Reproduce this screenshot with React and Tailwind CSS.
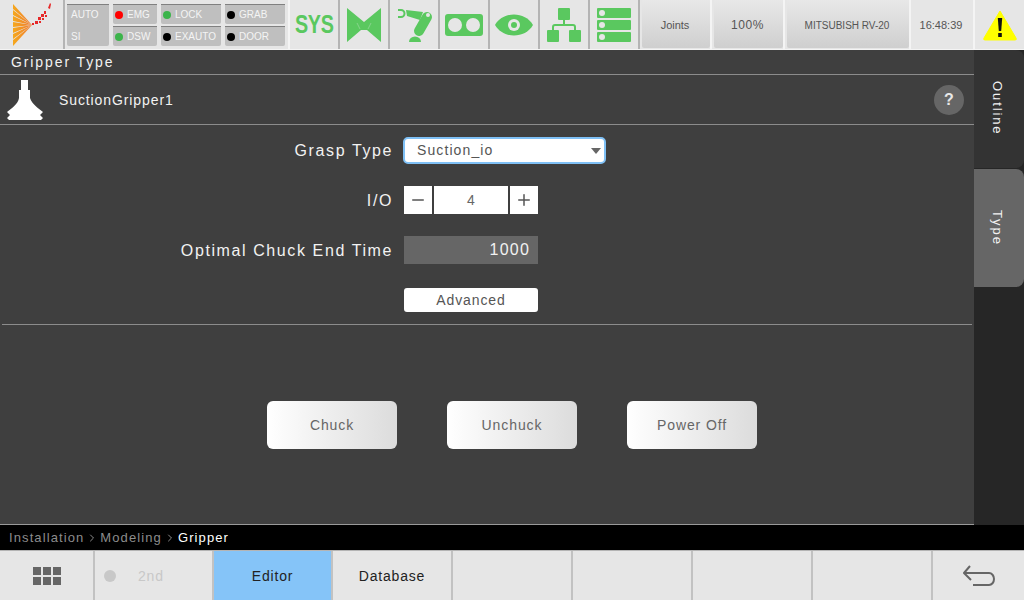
import { Plus, Minus, ChevronRight } from 'lucide-react'

const font = { fontFamily: '"Liberation Sans", Arial, sans-serif' }

function Lamp({ color, label, w }) {
  return (
    <div className={`h-5 flex items-center pl-[2px] gap-1 bg-[#bfbfbf] border-t border-[#808080] rounded-b-[2px] text-[10px] text-[#f4f4f4] ${w}`}>
      <span className={`w-2 h-2 rounded-full shrink-0 ${color}`} />
      <span>{label}</span>
    </div>
  )
}

function Logo() {
  const rays = [[4, 9], [10, 15], [16, 21], [22, 27], [28, 33], [34, 39], [40, 46]]
  return (
    <svg width="63" height="49" viewBox="0 0 63 49">
      <defs>
        <linearGradient id="fan" x1="0" x2="1" y1="0" y2="0">
          <stop offset="0" stopColor="#f5a81c" />
          <stop offset="1" stopColor="#f07a30" />
        </linearGradient>
      </defs>
      {rays.map(([a, b]) => (
        <polygon key={a} points={`13,${a} 13,${b} 32,25`} fill="url(#fan)" />
      ))}
      <g fill="#e62828">
        <rect x="32" y="23" width="2" height="2" />
        <rect x="35" y="21" width="3" height="3" />
        <rect x="38" y="17" width="3" height="3" />
        <rect x="39" y="21" width="2" height="2" />
        <rect x="41" y="14" width="3" height="3" />
        <rect x="42" y="18" width="2" height="2" />
        <rect x="44" y="11" width="2" height="3" />
        <rect x="45" y="15" width="2" height="2" />
        <polygon points="48,8 50,3 51,4 50,9" />
      </g>
    </svg>
  )
}

const green = '#5ac85f'

function IconCell({ children }) {
  return <div className="w-[50px] h-full border-r-2 border-[#b4b4b4] flex items-center justify-center shrink-0">{children}</div>
}

function GrayBtn({ w, children }) {
  return (
    <div className={`h-full border-r-2 border-[#f4f4f4] pl-[2px] pb-[1px] shrink-0 ${w}`}>
      <div className="h-full pt-[2px] pr-[2px] bg-gradient-to-b from-[#e8e8e8] to-[#cfcfcf] flex items-center justify-center text-[#555] rounded-b-[2px] text-[11px]">
        {children}
      </div>
    </div>
  )
}

function TopBar() {
  return (
    <div className="h-[49px] bg-[#e6e6e6] flex shrink-0">
      <div className="w-[65px] h-full border-r-2 border-[#b4b4b4] shrink-0"><Logo /></div>
      <div className="w-[225px] h-full border-r-2 border-[#f4f4f4] shrink-0 flex gap-1 pl-[2px] pt-1">
        <div className="w-[42px] h-[42px] bg-[#bfbfbf] border-t border-[#808080] rounded-b-[2px] flex flex-col gap-[2px] pl-1 text-[10px] text-[#f4f4f4]">
          <span className="h-5 flex items-center">AUTO</span>
          <span className="h-5 flex items-center">SI</span>
        </div>
        <div className="flex flex-col gap-[2px]">
          <Lamp color="bg-[#ff0000]" label="EMG" w="w-11" />
          <Lamp color="bg-[#3cb44b]" label="DSW" w="w-11" />
        </div>
        <div className="flex flex-col gap-[2px]">
          <Lamp color="bg-[#3cb44b]" label="LOCK" w="w-[60px]" />
          <Lamp color="bg-black" label="EXAUTO" w="w-[60px]" />
        </div>
        <div className="flex flex-col gap-[2px]">
          <Lamp color="bg-black" label="GRAB" w="w-[60px]" />
          <Lamp color="bg-black" label="DOOR" w="w-[60px]" />
        </div>
      </div>
      <IconCell>
        <span className="text-[26px] font-bold text-[#5ac85f] inline-block scale-x-[0.76] tracking-[-0.5px]">SYS</span>
      </IconCell>
      <IconCell>
        <svg width="36" height="36" viewBox="0 0 36 36">
          <polygon fill={green} points="1,1 18,15 35,1 35,35 21,23 15,23 1,35" />
          <path d="M11 16 L14 22 M25 16 L22 22" stroke="#9ad89d" strokeWidth="0.7" />
        </svg>
      </IconCell>
      <IconCell>
        <svg width="48" height="49" viewBox="0 0 48 49">
          <path d="M8 10 H11 A3.5 3.5 0 0 1 11 17 H8" fill="none" stroke={green} strokeWidth="2" />
          <polygon points="16,10 33,12 30,20 17,16" fill={green} />
          <line x1="37" y1="17" x2="29" y2="31" stroke={green} strokeWidth="10" strokeLinecap="round" />
          <circle cx="38" cy="15" r="2" fill="#e6e6e6" />
          <path d="M19 42 A6 5.5 0 0 1 31 42 Z" fill={green} />
        </svg>
      </IconCell>
      <IconCell>
        <svg width="38" height="22" viewBox="0 0 38 22">
          <rect width="38" height="22" rx="3" fill={green} />
          <circle cx="10" cy="11" r="7" fill="#e6e6e6" />
          <circle cx="28" cy="11" r="7" fill="#e6e6e6" />
        </svg>
      </IconCell>
      <IconCell>
        <svg width="38" height="22" viewBox="0 0 38 22">
          <path d="M0 11 C8 -3 30 -3 38 11 C30 25 8 25 0 11 Z" fill={green} />
          <circle cx="19" cy="11" r="6" fill="#e6e6e6" />
          <circle cx="19" cy="11" r="3" fill={green} />
        </svg>
      </IconCell>
      <IconCell>
        <svg width="34" height="34" viewBox="0 0 34 34">
          <rect x="11" y="0" width="12" height="12" rx="1" fill={green} />
          <rect x="0" y="22" width="12" height="12" rx="1" fill={green} />
          <rect x="22" y="22" width="12" height="12" rx="1" fill={green} />
          <path d="M17 12 V17 M6 22 V19 Q6 17 8 17 H26 Q28 17 28 19 V22" fill="none" stroke={green} strokeWidth="2" />
        </svg>
      </IconCell>
      <IconCell>
        <svg width="34" height="34" viewBox="0 0 34 34">
          {[0, 12, 24].map(y => (
            <g key={y}>
              <rect x="0" y={y} width="34" height="10" rx="1" fill={green} />
              <circle cx="5" cy={y + 5} r="3" fill="#e6e6e6" />
            </g>
          ))}
        </svg>
      </IconCell>
      <GrayBtn w="w-[72px]">Joints</GrayBtn>
      <GrayBtn w="w-[73px]"><span className="text-[12px] tracking-[0.6px]">100%</span></GrayBtn>
      <GrayBtn w="w-[126px]"><span className="text-[10px]">MITSUBISH RV-20</span></GrayBtn>
      <div className="w-[64px] h-full pt-[1px] pr-[2px] border-r-2 border-[#f4f4f4] flex items-center justify-center text-[11px] text-[#555] shrink-0">16:48:39</div>
      <div className="flex-1 flex items-center justify-center">
        <svg width="36" height="32" viewBox="0 0 36 32">
          <path d="M18 2 L34 29 Q35 31 33 31 H3 Q1 31 2 29 Z" fill="#ffff00" stroke="#ffff00" strokeLinejoin="round" />
          <path d="M15.8 9 H20.2 L19.2 22 H16.8 Z" fill="#111" />
          <rect x="16.2" y="24" width="3.6" height="4" fill="#111" />
        </svg>
      </div>
    </div>
  )
}

function Form() {
  const label = 'w-[391px] pt-[1px] text-right text-[16px] text-[#f2f2f2] tracking-[1.6px]'
  return (
    <div className="flex flex-col">
      <div className="h-[50px] flex items-center pt-[1px]">
        <div className="w-[391px] text-right text-[16px] text-[#f2f2f2] tracking-[1.6px]">Grasp Type</div>
        <div className="ml-[10px] w-[203px] h-[27px] bg-white border-2 border-[#7fc0f5] rounded-[5px] flex items-center justify-between pl-3 pr-[3px] text-[14px] text-[#555] tracking-[1.1px]">
          <span>Suction_io</span>
          <span className="w-0 h-0 border-l-[5px] border-r-[5px] border-t-[6px] border-l-transparent border-r-transparent border-t-[#666]" />
        </div>
      </div>
      <div className="h-[50px] flex items-center">
        <div className={label}>I/O</div>
        <div className="ml-[11px] flex gap-[2px] h-7 text-[#555]">
          <div className="w-7 bg-white flex items-center justify-center"><Minus size={18} strokeWidth={2} /></div>
          <div className="w-[74px] bg-white flex items-center justify-center text-[14px] text-[#666]">4</div>
          <div className="w-7 bg-white flex items-center justify-center"><Plus size={18} strokeWidth={2} /></div>
        </div>
      </div>
      <div className="h-[50px] flex items-center">
        <div className={label}>Optimal Chuck End Time</div>
        <div className="ml-[11px] w-[134px] h-7 bg-[#666] flex items-center justify-end pr-2 text-[16px] text-[#f2f2f2] tracking-[1.2px]">1000</div>
      </div>
      <div className="h-[50px] flex items-center">
        <div className="ml-[402px] w-[134px] h-6 bg-white rounded-[3px] flex items-center justify-center text-[14px] text-[#555] tracking-[0.9px]">Advanced</div>
      </div>
    </div>
  )
}

function ActionBtn({ label }) {
  return (
    <div className="w-[130px] h-12 rounded-[6px] bg-gradient-to-r from-white to-[#dcdcdc] flex items-center justify-center text-[14px] text-[#666] tracking-[0.9px]">
      {label}
    </div>
  )
}

function Main() {
  return (
    <div className="w-[974px] h-full bg-[#3f3f3f] flex flex-col border-b border-[#9a9a9a]">
      <div className="h-[25px] border-b border-[#8c8c8c] flex items-center pl-[11px] text-[14px] text-[#f2f2f2] tracking-[1.9px] shrink-0">Gripper Type</div>
      <div className="h-[50px] border-b border-[#8c8c8c] flex items-center shrink-0">
        <svg className="ml-[7px]" width="36" height="40" viewBox="0 0 36 40">
          <path d="M14 0 H21 V10 H23 V18 C25 24 31 28 36 32 L33 35 L36 38 L34 40 H2 L0 38 L3 35 L0 32 C5 28 11 24 12 18 V10 H14 Z" fill="#fff" />
        </svg>
        <span className="ml-[16px] pt-[1px] text-[14px] text-[#f2f2f2] tracking-[0.9px]">SuctionGripper1</span>
        <span className="ml-auto mr-[10px] w-[30px] h-[30px] rounded-full bg-[#666] flex items-center justify-center text-[16px] font-bold text-[#e8e8e8]">?</span>
      </div>
      <div className="h-[200px] mx-[2px] border-b border-[#8c8c8c] shrink-0">
        <Form />
      </div>
      <div className="flex gap-[50px] pl-[267px] pt-[76px]">
        <ActionBtn label="Chuck" />
        <ActionBtn label="Unchuck" />
        <ActionBtn label="Power Off" />
      </div>
    </div>
  )
}

function SideTabs() {
  return (
    <div className="flex-1 h-full bg-[#262626] flex flex-col">
      <div className="h-[118px] bg-[#333] rounded-r-[8px] flex justify-center items-start pt-[31px] pr-[3px] text-[13px] text-[#f2f2f2] tracking-[1.9px]">
        <span className="[writing-mode:vertical-rl]">Outline</span>
      </div>
      <div className="mt-[1px] h-[118px] bg-[#666] rounded-r-[8px] flex justify-center items-center pr-[3px] text-[13px] text-[#f2f2f2] tracking-[1.9px]">
        <span className="[writing-mode:vertical-rl]">Type</span>
      </div>
    </div>
  )
}

function BottomTab({ w, active, children }) {
  return (
    <div className={`h-full pt-[1px] border-r-2 border-[#c2c2c2] flex items-center justify-center text-[14px] tracking-[0.8px] text-[#222] shrink-0 ${w} ${active ? 'bg-[#85c4f8]' : ''}`}>
      {children}
    </div>
  )
}

export default function App() {
  return (
    <div className="w-[1024px] h-[600px] overflow-hidden flex flex-col bg-black" style={font}>
      <TopBar />
      <div className="h-[1px] bg-[#f4f4f4] shrink-0" />
      <div className="h-[475px] flex shrink-0">
        <Main />
        <SideTabs />
      </div>
      <div className="h-[25px] flex items-center pl-[9px] text-[13px] text-[#8c8c8c] tracking-[1.1px] shrink-0">
        <span>Installation</span>
        <ChevronRight className="mx-[2px]" size={12} />
        <span>Modeling</span>
        <ChevronRight className="mx-[2px]" size={12} />
        <span className="text-white">Gripper</span>
      </div>
      <div className="flex-1 border-t border-[#b4b4b4] bg-[#e6e6e6] flex">
        <BottomTab w="w-[95px]">
          <div className="grid grid-cols-3 gap-[2px] w-[28px]">
            {[0, 1, 2, 3, 4, 5].map(i => <span key={i} className="h-[8px] bg-[#666]" />)}
          </div>
        </BottomTab>
        <BottomTab w="w-[119px]">
          <div className="w-full flex items-center pl-[9px] text-[#c8c8c8]">
            <span className="w-3 h-3 rounded-full bg-[#c8c8c8]" />
            <span className="ml-[22px]">2nd</span>
          </div>
        </BottomTab>
        <BottomTab w="w-[119px]" active>Editor</BottomTab>
        <BottomTab w="w-[120px]">Database</BottomTab>
        <BottomTab w="w-[120px]" />
        <BottomTab w="w-[120px]" />
        <BottomTab w="w-[120px]" />
        <BottomTab w="w-[120px]" />
        <div className="flex-1 flex items-center justify-center text-[#666]">
          <svg width="32" height="22" viewBox="0 0 32 22" fill="none" stroke="currentColor" strokeWidth="2">
            <path d="M7 1 L1 8 L8 15 M1 8 H26 A5 6 0 0 1 26 20 H10" strokeLinejoin="round" />
          </svg>
        </div>
      </div>
    </div>
  )
}
